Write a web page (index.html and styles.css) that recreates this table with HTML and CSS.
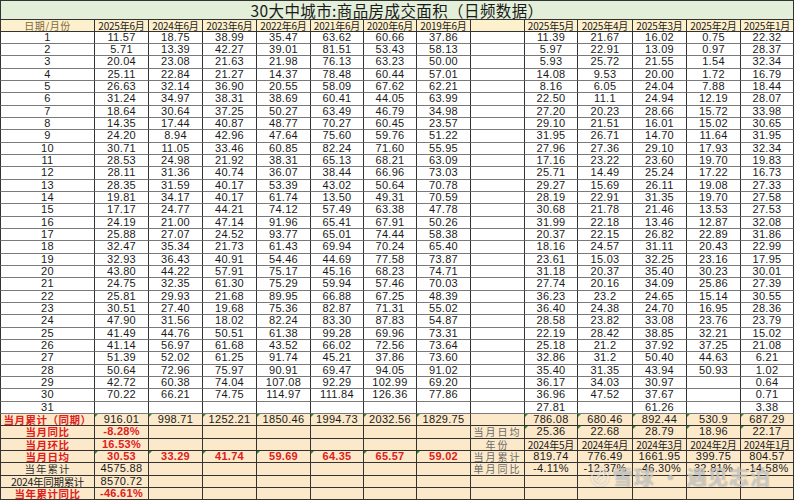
FILE: index.html
```html
<!DOCTYPE html>
<html lang="zh">
<head>
<meta charset="utf-8">
<title>30大中城市商品房成交面积</title>
<link rel="stylesheet" href="styles.css">
</head>
<body>
<div class="page">
<div class="sheet">
<div class="title"><span>30大中城市:商品房成交面积（日频数据）</span></div>
<div class="row head"><div class="dh">日期/月份</div><div>2025年6月</div><div>2024年6月</div><div>2023年6月</div><div>2022年6月</div><div>2021年6月</div><div>2020年6月</div><div>2019年6月</div><div></div><div>2025年5月</div><div>2025年4月</div><div>2025年3月</div><div>2025年2月</div><div>2025年1月</div></div>
<div class="row data"><div>1</div><div>11.57</div><div>18.75</div><div>38.99</div><div>35.47</div><div>63.62</div><div>60.66</div><div>37.86</div><div></div><div>11.39</div><div>21.67</div><div>16.02</div><div>0.75</div><div>22.32</div></div>
<div class="row data"><div>2</div><div>5.71</div><div>13.39</div><div>42.27</div><div>39.01</div><div>81.51</div><div>53.43</div><div>58.13</div><div></div><div>5.97</div><div>22.91</div><div>13.09</div><div>0.97</div><div>28.37</div></div>
<div class="row data"><div>3</div><div>20.04</div><div>23.08</div><div>21.63</div><div>21.98</div><div>76.13</div><div>63.23</div><div>50.00</div><div></div><div>5.93</div><div>25.72</div><div>21.55</div><div>1.54</div><div>32.34</div></div>
<div class="row data"><div>4</div><div>25.11</div><div>22.84</div><div>21.27</div><div>14.37</div><div>78.48</div><div>60.44</div><div>57.01</div><div></div><div>14.08</div><div>9.53</div><div>20.00</div><div>1.72</div><div>16.79</div></div>
<div class="row data"><div>5</div><div>26.63</div><div>32.14</div><div>36.90</div><div>20.55</div><div>58.09</div><div>67.62</div><div>62.21</div><div></div><div>8.16</div><div>6.05</div><div>24.04</div><div>7.88</div><div>18.44</div></div>
<div class="row data"><div>6</div><div>31.24</div><div>34.97</div><div>38.31</div><div>38.69</div><div>60.41</div><div>44.05</div><div>63.99</div><div></div><div>22.50</div><div>11.1</div><div>24.94</div><div>12.19</div><div>28.07</div></div>
<div class="row data"><div>7</div><div>18.64</div><div>30.64</div><div>37.25</div><div>50.27</div><div>63.49</div><div>46.79</div><div>34.98</div><div></div><div>27.20</div><div>20.23</div><div>28.66</div><div>15.72</div><div>33.98</div></div>
<div class="row data"><div>8</div><div>14.35</div><div>17.44</div><div>40.87</div><div>48.77</div><div>70.27</div><div>60.45</div><div>23.57</div><div></div><div>29.10</div><div>21.51</div><div>16.01</div><div>15.02</div><div>30.65</div></div>
<div class="row data"><div>9</div><div>24.20</div><div>8.94</div><div>42.96</div><div>47.64</div><div>75.60</div><div>59.76</div><div>51.22</div><div></div><div>31.95</div><div>26.71</div><div>14.70</div><div>11.64</div><div>31.95</div></div>
<div class="row data"><div>10</div><div>30.71</div><div>11.05</div><div>33.46</div><div>60.85</div><div>82.24</div><div>71.60</div><div>55.95</div><div></div><div>27.96</div><div>27.36</div><div>29.10</div><div>17.93</div><div>32.34</div></div>
<div class="row data"><div>11</div><div>28.53</div><div>24.98</div><div>21.92</div><div>38.31</div><div>65.13</div><div>68.21</div><div>63.09</div><div></div><div>17.16</div><div>23.22</div><div>23.60</div><div>19.70</div><div>19.83</div></div>
<div class="row data"><div>12</div><div>28.11</div><div>31.36</div><div>40.74</div><div>36.07</div><div>38.44</div><div>66.96</div><div>73.03</div><div></div><div>25.71</div><div>14.49</div><div>25.24</div><div>17.22</div><div>16.73</div></div>
<div class="row data"><div>13</div><div>28.35</div><div>31.59</div><div>40.17</div><div>53.39</div><div>43.02</div><div>50.64</div><div>70.78</div><div></div><div>29.27</div><div>15.69</div><div>26.11</div><div>19.08</div><div>27.33</div></div>
<div class="row data"><div>14</div><div>19.81</div><div>34.17</div><div>40.17</div><div>61.74</div><div>13.50</div><div>49.31</div><div>70.59</div><div></div><div>28.19</div><div>22.91</div><div>31.35</div><div>19.70</div><div>27.58</div></div>
<div class="row data"><div>15</div><div>17.17</div><div>24.77</div><div>44.21</div><div>74.12</div><div>57.49</div><div>63.38</div><div>47.78</div><div></div><div>30.68</div><div>21.78</div><div>21.46</div><div>13.53</div><div>27.53</div></div>
<div class="row data"><div>16</div><div>24.19</div><div>21.00</div><div>47.14</div><div>91.96</div><div>65.41</div><div>67.91</div><div>50.26</div><div></div><div>31.99</div><div>22.18</div><div>13.46</div><div>12.87</div><div>32.08</div></div>
<div class="row data"><div>17</div><div>25.88</div><div>27.07</div><div>24.52</div><div>93.77</div><div>65.01</div><div>74.44</div><div>58.38</div><div></div><div>20.37</div><div>22.15</div><div>26.82</div><div>22.89</div><div>31.86</div></div>
<div class="row data"><div>18</div><div>32.47</div><div>35.34</div><div>21.73</div><div>61.43</div><div>69.94</div><div>70.24</div><div>65.40</div><div></div><div>18.16</div><div>24.57</div><div>31.11</div><div>20.43</div><div>22.99</div></div>
<div class="row data"><div>19</div><div>32.93</div><div>36.43</div><div>40.91</div><div>54.46</div><div>44.69</div><div>77.58</div><div>73.87</div><div></div><div>23.61</div><div>15.03</div><div>32.25</div><div>23.16</div><div>17.95</div></div>
<div class="row data"><div>20</div><div>43.80</div><div>44.22</div><div>57.91</div><div>75.17</div><div>45.16</div><div>68.23</div><div>74.71</div><div></div><div>31.18</div><div>20.37</div><div>35.40</div><div>30.23</div><div>30.01</div></div>
<div class="row data"><div>21</div><div>24.75</div><div>32.35</div><div>61.30</div><div>75.29</div><div>59.94</div><div>57.46</div><div>70.03</div><div></div><div>27.74</div><div>20.16</div><div>34.09</div><div>25.86</div><div>27.39</div></div>
<div class="row data"><div>22</div><div>25.81</div><div>29.93</div><div>21.68</div><div>89.95</div><div>66.88</div><div>67.25</div><div>48.39</div><div></div><div>36.23</div><div>23.2</div><div>24.65</div><div>15.14</div><div>30.55</div></div>
<div class="row data"><div>23</div><div>30.51</div><div>27.40</div><div>19.68</div><div>75.36</div><div>82.87</div><div>71.31</div><div>55.02</div><div></div><div>36.40</div><div>24.38</div><div>24.70</div><div>16.95</div><div>28.36</div></div>
<div class="row data"><div>24</div><div>47.90</div><div>31.56</div><div>18.02</div><div>82.24</div><div>83.30</div><div>87.83</div><div>54.87</div><div></div><div>28.58</div><div>23.82</div><div>33.08</div><div>23.76</div><div>23.79</div></div>
<div class="row data"><div>25</div><div>41.49</div><div>44.76</div><div>50.51</div><div>61.38</div><div>99.28</div><div>69.96</div><div>73.31</div><div></div><div>22.19</div><div>28.42</div><div>38.85</div><div>32.21</div><div>15.02</div></div>
<div class="row data"><div>26</div><div>41.14</div><div>56.97</div><div>61.68</div><div>43.52</div><div>66.02</div><div>72.56</div><div>73.64</div><div></div><div>25.18</div><div>21.2</div><div>37.92</div><div>37.25</div><div>21.08</div></div>
<div class="row data"><div>27</div><div>51.39</div><div>52.02</div><div>61.25</div><div>91.74</div><div>45.21</div><div>37.86</div><div>73.60</div><div></div><div>32.86</div><div>31.2</div><div>50.40</div><div>44.63</div><div>6.21</div></div>
<div class="row data"><div>28</div><div>50.64</div><div>72.96</div><div>75.97</div><div>90.91</div><div>69.47</div><div>94.05</div><div>91.02</div><div></div><div>35.40</div><div>31.35</div><div>43.94</div><div>50.93</div><div>1.02</div></div>
<div class="row data"><div>29</div><div>42.72</div><div>60.38</div><div>74.04</div><div>107.08</div><div>92.29</div><div>102.99</div><div>69.20</div><div></div><div>36.17</div><div>34.03</div><div>30.97</div><div></div><div>0.64</div></div>
<div class="row data"><div>30</div><div>70.22</div><div>66.21</div><div>74.75</div><div>114.97</div><div>111.84</div><div>126.36</div><div>77.86</div><div></div><div>36.96</div><div>47.52</div><div>37.67</div><div></div><div>0.71</div></div>
<div class="row data"><div>31</div><div></div><div></div><div></div><div></div><div></div><div></div><div></div><div></div><div>27.81</div><div></div><div>61.26</div><div></div><div>3.38</div></div>
<div class="row sum"><div class="lab">当月累计（同期）</div><div class="tick">916.01</div><div class="tick">998.71</div><div class="tick">1252.21</div><div class="tick">1850.46</div><div class="tick">1994.73</div><div class="tick">2032.56</div><div class="tick">1829.75</div><div></div><div class="tick">786.08</div><div class="tick">680.46</div><div class="tick">892.44</div><div class="tick">530.9</div><div class="tick">687.29</div></div>
<div class="row sum"><div class="lab">当月同比</div><div class="red">-8.28%</div><div></div><div></div><div></div><div></div><div></div><div></div><div class="side">当月日均</div><div class="tick">25.36</div><div class="tick">22.68</div><div class="tick">28.79</div><div class="tick">18.96</div><div class="tick">22.17</div></div>
<div class="row sum"><div class="lab">当月环比</div><div class="red">16.53%</div><div></div><div></div><div></div><div></div><div></div><div></div><div class="side">年份</div><div class="ym">2024年5月</div><div class="ym">2024年4月</div><div class="ym">2024年3月</div><div class="ym">2024年2月</div><div class="ym">2024年1月</div></div>
<div class="row sum"><div class="lab">当月日均</div><div class="red tick">30.53</div><div class="red tick">33.29</div><div class="red tick">41.74</div><div class="red tick">59.69</div><div class="red tick">64.35</div><div class="red tick">65.57</div><div class="red tick">59.02</div><div class="side">当月累计</div><div>819.74</div><div>776.49</div><div>1661.95</div><div>399.75</div><div>804.57</div></div>
<div class="row sum"><div class="lab2">当年累计</div><div>4575.88</div><div></div><div></div><div></div><div></div><div></div><div></div><div class="side">单月同比</div><div>-4.11%</div><div>-12.37%</div><div>-46.30%</div><div>32.81%</div><div>-14.58%</div></div>
<div class="row sum"><div class="lab3">2024年同期累计</div><div>8570.72</div><div></div><div></div><div></div><div></div><div></div><div></div><div></div><div></div><div></div><div></div><div></div><div></div></div>
<div class="row sum"><div class="lab">当年累计同比</div><div class="red">-46.61%</div><div></div><div></div><div></div><div></div><div></div><div></div><div></div><div></div><div></div><div></div><div></div><div></div></div>
</div>
<div class="watermark">
<svg class="wm-logo" viewBox="0 0 30 30" width="20" height="20"><circle cx="15" cy="15" r="12.5" fill="none" stroke="currentColor" stroke-width="2.4"/><path d="M9 20c1-5 4-9 9-10M12 21c1-3 3-5 6-6M20 9l1 5" fill="none" stroke="currentColor" stroke-width="2.4" stroke-linecap="round"/></svg>
<span class="wm-text">雪球 · 遇见志泊</span>
</div>
</div>
</body>
</html>
```

FILE: styles.css
```css
body {
  margin: 0;
  background: #ffffff;
  font-family: "Liberation Sans", "Noto Sans CJK SC", sans-serif;
}

.page {
  position: relative;
  width: 794px;
  height: 500px;
  overflow: hidden;
}

.sheet {
  display: grid;
  grid-template-columns: 95px 54px 54px 54px 54px 53px 53px 54px 54px 53px 55px 54px 54px 53px;
  grid-template-rows: 19.5px repeat(39, 12.33px);
  width: 794px;
}

.row {
  display: contents;
}

.title {
  grid-column: 1 / -1;
  display: flex;
  align-items: center;
  justify-content: center;
  background: #e3efd9;
  border: 1px solid #333;
  box-sizing: border-box;
  font-family: "Noto Sans CJK SC", sans-serif;
  font-size: 15.5px;
  line-height: 16px;
  color: #1a1a1a;
  letter-spacing: 0.4px;
}

.row > div {
  box-sizing: border-box;
  border-right: 1px solid #333;
  border-bottom: 1px solid #7a7a7a;
  font-size: 11px;
  line-height: 11.33px;
  text-align: center;
  color: #1a1a1a;
  white-space: nowrap;
  position: relative;
  letter-spacing: 0.3px;
}

.row > div:first-child {
  border-left: 1px solid #333;
}

.head > div {
  background: #fdf0cc;
  border-bottom: 1px solid #333;
  font-family: "Noto Sans CJK SC", sans-serif;
  font-size: 10px;
  letter-spacing: -0.2px;
}

.head > .dh {
  color: #7d6a3a;
  letter-spacing: 0.5px;
}

.data > div {
  background: #ffffff;
}

.sum > div {
  background: #fce9c9;
  border-bottom: 1px solid #333;
}

.sum > .lab {
  color: #e0201c;
  font-family: "Noto Sans CJK SC", sans-serif;
  font-weight: 700;
  font-size: 10.5px;
  letter-spacing: 0.5px;
}

.sum > .lab2 {
  font-family: "Noto Sans CJK SC", sans-serif;
  color: #333;
  font-size: 10.5px;
  letter-spacing: 1px;
}

.sum > .lab3 {
  font-family: "Noto Sans CJK SC", sans-serif;
  color: #222;
  font-size: 10.5px;
  letter-spacing: -0.3px;
}

.sum > .red {
  color: #e0201c;
  font-weight: 700;
}

.sum > .side {
  font-family: "Noto Sans CJK SC", sans-serif;
  color: #6a6a6a;
  font-size: 10px;
  letter-spacing: 2px;
}

.sum > .ym {
  font-family: "Noto Sans CJK SC", sans-serif;
  font-size: 10px;
  letter-spacing: -0.2px;
}

.tick::before {
  content: "";
  position: absolute;
  left: 0;
  top: 0;
  border-top: 3px solid #2e8b2e;
  border-right: 3px solid transparent;
}

.watermark {
  position: absolute;
  left: 590px;
  top: 462px;
  display: flex;
  align-items: center;
  gap: 3px;
  color: rgba(255, 255, 255, 0.55);
  pointer-events: none;
}

.wm-logo {
  filter: drop-shadow(0 0 1px rgba(90, 90, 90, 0.6));
}

.wm-text {
  font-family: "Noto Sans CJK SC", sans-serif;
  font-size: 20px;
  font-weight: 700;
  letter-spacing: 1px;
  text-shadow: 0 0 1px rgba(90, 90, 90, 0.7);
}
```
